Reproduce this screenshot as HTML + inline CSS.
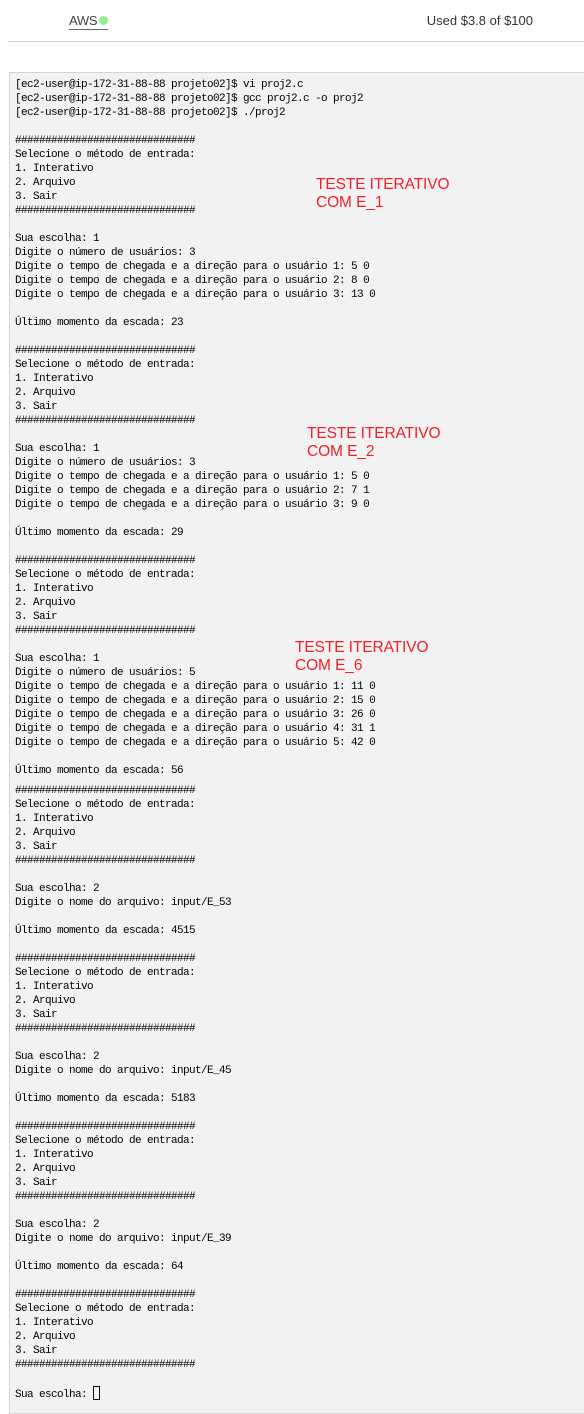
<!DOCTYPE html>
<html><head><meta charset="utf-8"><style>
body{margin:0;width:584px;height:1406px;background:#fff;position:relative;overflow:hidden;font-family:"Liberation Sans",sans-serif}
.aws{position:absolute;left:69px;top:13px;font-size:13px;letter-spacing:-0.3px;color:#444}
.uline{position:absolute;left:69px;top:29px;width:39px;height:1px;background:#666}
.dot{position:absolute;left:99px;top:16px;width:9px;height:9px;border-radius:50%;background:#90ee90}
.used{position:absolute;left:380px;width:153px;text-align:right;top:13px;font-size:13px;color:#333}
.hr{position:absolute;left:8px;right:0;top:41px;height:1px;background:#d0d0d0}
.term{position:absolute;left:9px;top:72px;width:580px;height:1340px;background:#f2f2f2;border:1px solid #d4d4d4;border-right:none}
pre{position:absolute;left:15px;top:78px;margin:0;font-family:"Liberation Mono",monospace;font-size:11px;letter-spacing:-0.6px;line-height:14px;color:#000}
.red{position:absolute;color:#f0202a;font-size:15.5px;line-height:18px;letter-spacing:-0.1px;font-family:"Liberation Sans",sans-serif}
.cur{display:inline-block;width:5px;height:12px;border:1px solid #111;vertical-align:-3px}
</style></head><body>
<div class="aws">AWS</div><div class="uline"></div><div class="dot"></div>
<div class="used">Used $3.8 of $100</div>
<div class="hr"></div>
<div class="term"></div>
<pre>[ec2-user@ip-172-31-88-88 projeto02]$ vi proj2.c
[ec2-user@ip-172-31-88-88 projeto02]$ gcc proj2.c -o proj2
[ec2-user@ip-172-31-88-88 projeto02]$ ./proj2

##############################
Selecione o método de entrada:
1. Interativo
2. Arquivo
3. Sair
##############################

Sua escolha: 1
Digite o número de usuários: 3
Digite o tempo de chegada e a direção para o usuário 1: 5 0
Digite o tempo de chegada e a direção para o usuário 2: 8 0
Digite o tempo de chegada e a direção para o usuário 3: 13 0

Último momento da escada: 23

##############################
Selecione o método de entrada:
1. Interativo
2. Arquivo
3. Sair
##############################

Sua escolha: 1
Digite o número de usuários: 3
Digite o tempo de chegada e a direção para o usuário 1: 5 0
Digite o tempo de chegada e a direção para o usuário 2: 7 1
Digite o tempo de chegada e a direção para o usuário 3: 9 0

Último momento da escada: 29

##############################
Selecione o método de entrada:
1. Interativo
2. Arquivo
3. Sair
##############################

Sua escolha: 1
Digite o número de usuários: 5
Digite o tempo de chegada e a direção para o usuário 1: 11 0
Digite o tempo de chegada e a direção para o usuário 2: 15 0
Digite o tempo de chegada e a direção para o usuário 3: 26 0
Digite o tempo de chegada e a direção para o usuário 4: 31 1
Digite o tempo de chegada e a direção para o usuário 5: 42 0

Último momento da escada: 56
<span style="display:block;height:6px"></span>##############################
Selecione o método de entrada:
1. Interativo
2. Arquivo
3. Sair
##############################

Sua escolha: 2
Digite o nome do arquivo: input/E_53

Último momento da escada: 4515

##############################
Selecione o método de entrada:
1. Interativo
2. Arquivo
3. Sair
##############################

Sua escolha: 2
Digite o nome do arquivo: input/E_45

Último momento da escada: 5183

##############################
Selecione o método de entrada:
1. Interativo
2. Arquivo
3. Sair
##############################

Sua escolha: 2
Digite o nome do arquivo: input/E_39

Último momento da escada: 64

##############################
Selecione o método de entrada:
1. Interativo
2. Arquivo
3. Sair
##############################

Sua escolha: <span class="cur"></span></pre>
<div class="red" style="left:316px;top:176px">TESTE ITERATIVO<br>COM E_1</div>
<div class="red" style="left:307px;top:425px">TESTE ITERATIVO<br>COM E_2</div>
<div class="red" style="left:295px;top:639px">TESTE ITERATIVO<br>COM E_6</div>
</body></html>
